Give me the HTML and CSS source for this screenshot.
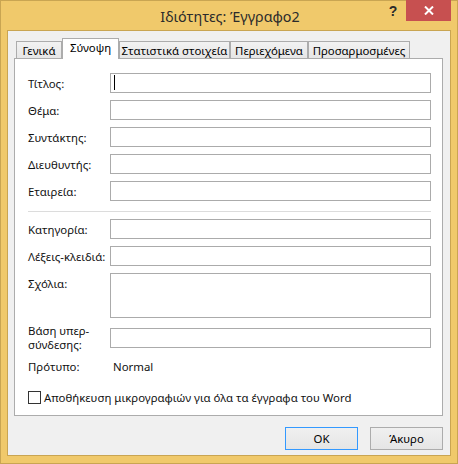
FILE: index.html
```html
<!DOCTYPE html>
<html lang="el">
<head>
<meta charset="utf-8">
<title>Ιδιότητες: Έγγραφο2</title>
<link rel="stylesheet" href="styles.css">
</head>
<body>
<div class="window">
  <div class="titlebar">
    <div class="title">Ιδιότητες: Έγγραφο2</div>
    <div class="caption">
      <span class="help">?</span>
      <span class="close"><svg width="10" height="9" viewBox="0 0 10 9"><path d="M1 0.5 L9 8.5 M9 0.5 L1 8.5" stroke="#fff" stroke-width="2" fill="none"/></svg></span>
    </div>
  </div>
  <div class="client">
    <div class="tabs">
      <div class="tab tab-general">Γενικά</div>
      <div class="tab tab-summary active">Σύνοψη</div>
      <div class="tab tab-stats">Στατιστικά στοιχεία</div>
      <div class="tab tab-contents">Περιεχόμενα</div>
      <div class="tab tab-custom">Προσαρμοσμένες</div>
    </div>
    <div class="panel">
      <div class="rows">
        <div class="row"><div class="label">Τίτλος:</div><div class="field"><span class="caret"></span></div></div>
        <div class="row"><div class="label">Θέμα:</div><div class="field"></div></div>
        <div class="row"><div class="label">Συντάκτης:</div><div class="field"></div></div>
        <div class="row"><div class="label">Διευθυντής:</div><div class="field"></div></div>
        <div class="row"><div class="label">Εταιρεία:</div><div class="field"></div></div>
      </div>
      <div class="sep"></div>
      <div class="rows">
        <div class="row"><div class="label">Κατηγορία:</div><div class="field"></div></div>
        <div class="row"><div class="label">Λέξεις-κλειδιά:</div><div class="field"></div></div>
        <div class="row row-top"><div class="label">Σχόλια:</div><div class="field field-tall"></div></div>
        <div class="row row-link"><div class="label label-two">Βάση υπερ-<br>σύνδεσης:</div><div class="field"></div></div>
        <div class="row row-template"><div class="label">Πρότυπο:</div><div class="value">Normal</div></div>
      </div>
      <div class="check-row">
        <span class="checkbox"></span>
        <span class="check-label">Αποθήκευση μικρογραφιών για όλα τα έγγραφα του Word</span>
      </div>
    </div>
    <div class="buttons">
      <div class="btn btn-default">OK</div>
      <div class="btn">Άκυρο</div>
    </div>
  </div>
</div>
</body>
</html>
```

FILE: styles.css
```css
html, body {
  margin: 0;
  padding: 0;
  background: #f0c96b;
}
body {
  font-family: "Noto Sans", "Open Sans", sans-serif;
  font-size: 11.4px;
  color: #000;
}
.window {
  position: relative;
  width: 458px;
  height: 464px;
  box-sizing: border-box;
  border: 1px solid #c9a552;
  background: #f0c96b;
  padding: 0 6px 7px 6px;
  display: flex;
  flex-direction: column;
}
.titlebar {
  height: 29px;
  display: flex;
  align-items: center;
  justify-content: center;
}
.title {
  font-size: 14.3px;
  color: #2b2b2b;
  margin-top: 2px;
  margin-left: 2px;
}
.caption {
  position: absolute;
  top: -1px;
  right: 6px;
  display: flex;
  height: 21px;
}
.help {
  width: 26px;
  height: 21px;
  display: flex;
  align-items: center;
  justify-content: center;
  font-weight: bold;
  font-size: 14px;
  color: #2b2b2b;
  font-family: "Liberation Sans", sans-serif;
}
.close {
  width: 45px;
  height: 21px;
  background: #c75050;
  display: flex;
  align-items: center;
  justify-content: center;
}
.close svg { display: block; }
.client {
  height: 426px;
  box-sizing: border-box;
  border: 1px solid #c9a552;
  background: #f0f0f0;
  display: flex;
  flex-direction: column;
}
.tabs {
  display: flex;
  align-items: flex-end;
  height: 20px;
  margin: 7px 7px 0 6px;
  padding-left: 2px;
  position: relative;
  z-index: 1;
}
.tab {
  box-sizing: border-box;
  height: 17px;
  border: 1px solid #acacac;
  border-bottom: none;
  background: linear-gradient(#f2f2f2, #e6e6e6);
  display: flex;
  align-items: center;
  justify-content: center;
  white-space: nowrap;
  line-height: 15px;
}
.tab.active {
  height: 21px;
  margin-bottom: -1px;
  background: #fff;
  padding-bottom: 3px;
}
.tab-general { width: 46px; }
.tab-summary { width: 57px; }
.tab-stats { width: 111px; }
.tab-contents { width: 78px; }
.tab-custom { width: 102px; }
.panel {
  box-sizing: border-box;
  height: 358px;
  margin: 0 7px 0 6px;
  border: 1px solid #acacac;
  background: #fff;
  padding: 14px 11px 0 13px;
}
.rows {
  display: flex;
  flex-direction: column;
  gap: 7px;
}
.row {
  display: flex;
  align-items: center;
  height: 20px;
}
.label {
  width: 82px;
  flex: none;
  line-height: 13px;
  color: #111;
  white-space: nowrap;
}
.label-two { line-height: 14px; }
.field {
  flex: 1;
  height: 20px;
  box-sizing: border-box;
  border: 1px solid #ababab;
  background: #fff;
  position: relative;
}
.caret {
  position: absolute;
  left: 3px;
  top: 1px;
  width: 1px;
  height: 15px;
  background: #000;
}
.row-top { align-items: flex-start; height: 45px; }
.row-top .label { padding-top: 4px; }
.field-tall { height: 45px; }
.row-link { margin-top: 3px; }
.row-template { margin-top: 5px; height: 13px; }
.value { padding-left: 3px; color: #111; }
.sep {
  height: 1px;
  background: #dcdcdc;
  margin: 10px 0 7px 0;
}
.check-row {
  display: flex;
  align-items: center;
  margin-top: 18px;
  height: 13px;
}
.checkbox {
  width: 13px;
  height: 13px;
  box-sizing: border-box;
  border: 1px solid #333;
  background: #fff;
  flex: none;
}
.check-label {
  margin-left: 3px;
  color: #111;
  white-space: nowrap;
}
.buttons {
  display: flex;
  justify-content: flex-end;
  gap: 12px;
  margin: 11px 7px 0 0;
}
.btn {
  width: 73px;
  height: 23px;
  box-sizing: border-box;
  border: 1px solid #acacac;
  background: linear-gradient(#f0f0f0, #e5e5e5);
  display: flex;
  align-items: center;
  justify-content: center;
  color: #000;
}
.btn-default { border-color: #3399ff; }
```
